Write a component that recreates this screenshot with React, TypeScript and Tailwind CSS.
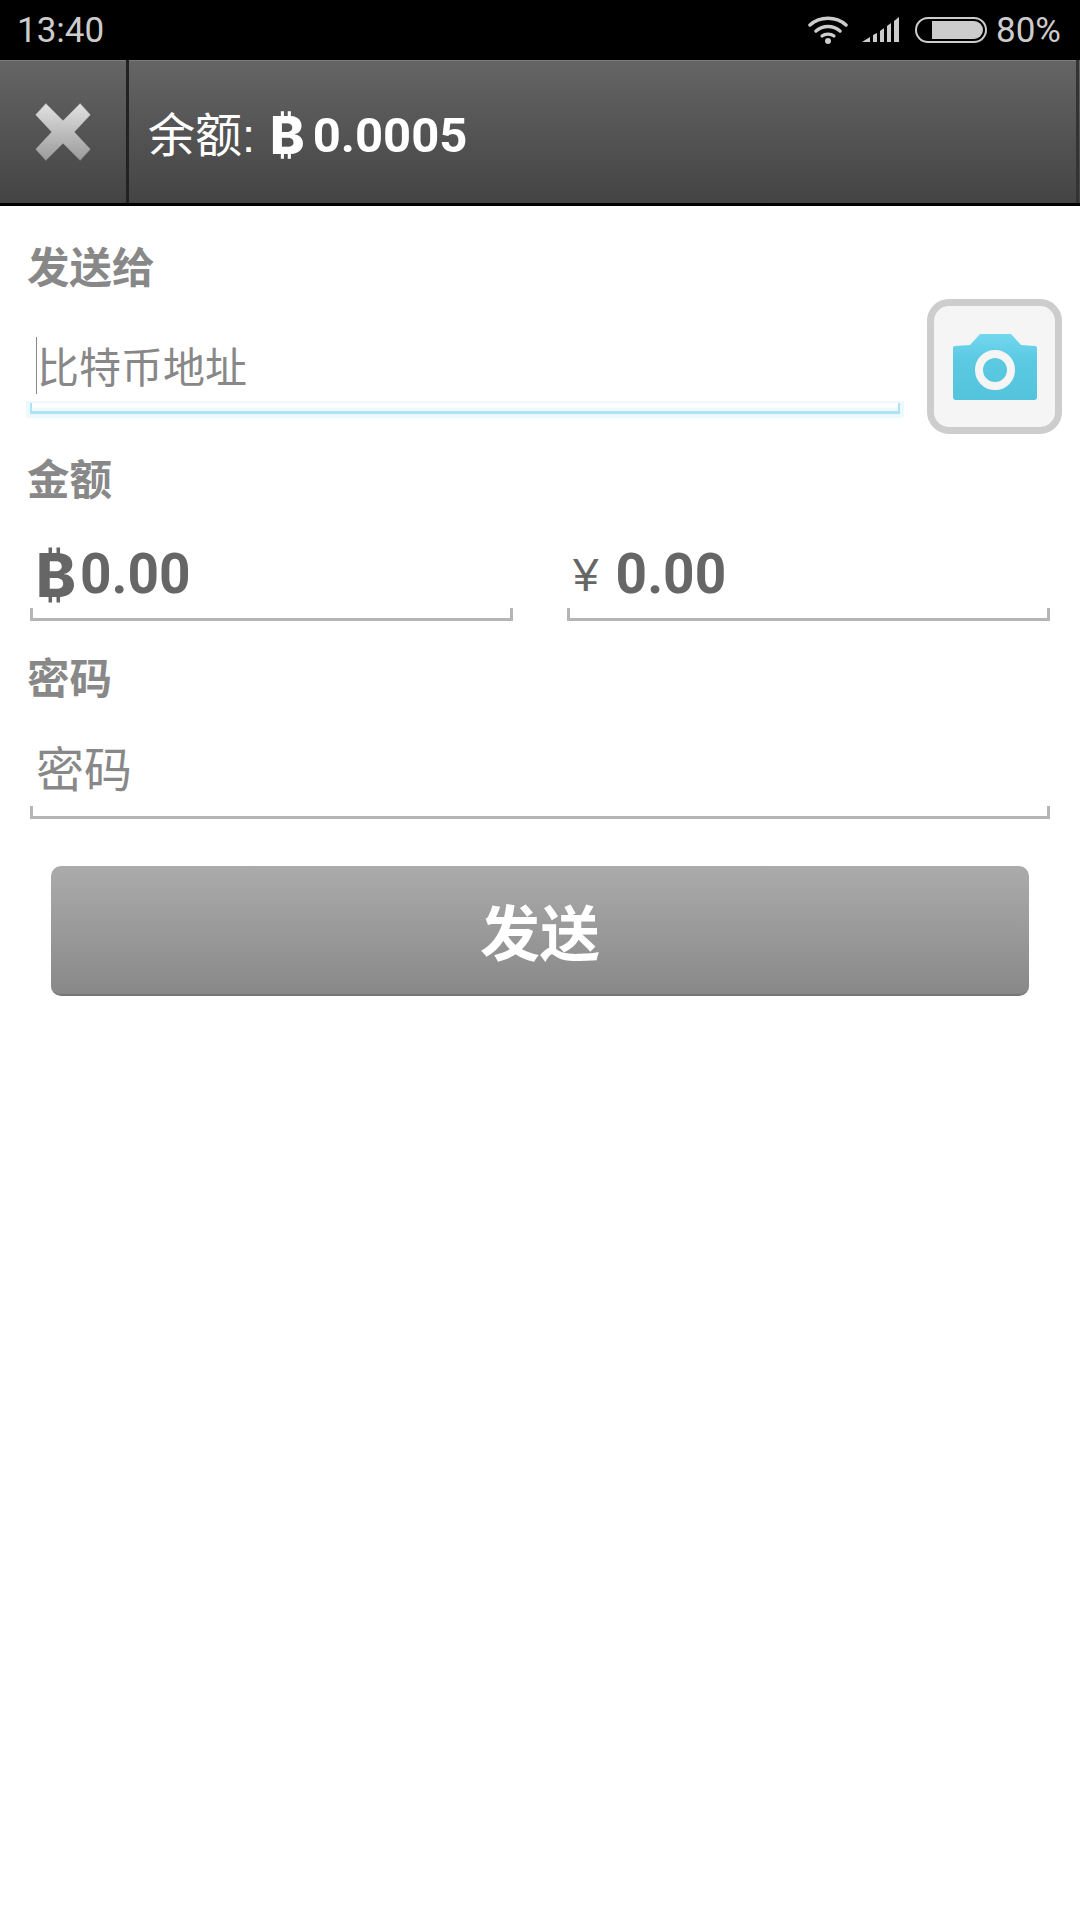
const cjk = "font-['Liberation_Sans','Noto_Sans_CJK_SC',sans-serif]"

const WifiIcon = () => (
    <svg width="40" height="30" viewBox="0 0 40 30" fill="none" stroke="#ccc" strokeLinecap="round">
        <path d="M2 10 C12 1 28 1 38 10" strokeWidth="3.5" />
        <path d="M8 16 C15 10 25 10 32 16" strokeWidth="3.5" />
        <path d="M14 21 C17 18.500 23 18.500 26 21" strokeWidth="3.2" />
        <circle cx="20" cy="26" r="3" fill="#ccc" stroke="none" />
    </svg>
)

const SignalIcon = () => (
    <svg width="38" height="26" viewBox="0 0 38 26" fill="#ccc">
        <path d="M0 25 L8 20 L8 25 Z" />
        <path d="M11 18 L15 16 L15 25 L11 25 Z" />
        <path d="M18 14 L22 11 L22 25 L18 25 Z" />
        <path d="M25 9 L29 6 L29 25 L25 25 Z" />
        <path d="M32 4 L37 0 L37 25 L32 25 Z" />
    </svg>
)

const BatteryIcon = () => (
    <div className="flex h-[26px] w-[72px] items-center justify-end rounded-[13px] border-2 border-[#ccc] pr-[2px]">
        <div className="h-[18px] w-[51px] rounded-r-[9px] bg-[#ccc]" />
    </div>
)

const CloseIcon = () => (
    <svg width="60" height="60" viewBox="0 0 54 56">
        <defs>
            <linearGradient id="closeFill" x1="0" y1="0" x2="0" y2="1">
                <stop offset="0" stopColor="#e2e2e2" />
                <stop offset="1" stopColor="#9a9a9a" />
            </linearGradient>
        </defs>
        <path
            d="M11 1 L27 17 L43 1 L53 12 L38 28 L53 44 L43 55 L27 39 L11 55 L1 44 L16 28 L1 12 Z"
            fill="url(#closeFill)"
            stroke="#444"
            strokeOpacity="0.4"
            strokeWidth="1"
            strokeLinejoin="round"
        />
    </svg>
)

const CameraIcon = () => (
    <svg width="84" height="68" viewBox="0 0 84 68">
        <defs>
            <linearGradient id="cameraFill" x1="0" y1="0" x2="0" y2="1">
                <stop offset="0" stopColor="#72d8ef" />
                <stop offset="0.4" stopColor="#5bc9e2" />
                <stop offset="1" stopColor="#54c3dc" />
            </linearGradient>
        </defs>
        <path
            d="M2 13 L17 12 L27 1 L58 1 L68 12 L82 13 Q84 13 84 15 L84 64 Q84 67 81 67 L3 67 Q0 67 0 64 L0 15 Q0 13 2 13 Z"
            fill="url(#cameraFill)"
        />
        <circle cx="42" cy="37" r="16" fill="none" stroke="#f5f5f5" strokeWidth="8" />
    </svg>
)

const FieldLine = ({ focused }: { focused?: boolean }) => (
    <div
        className={
            focused
                ? "h-[11px] w-full rounded-b-[1px] border-x-[2px] border-b-[3px] border-[#ace3f6] shadow-[0_0_0_4px_#edf9fd,inset_0_-3px_0_#edf9fd] [clip-path:inset(-2px_-6px_-6px_-6px)]"
                : "h-[13px] w-full border-x-[3px] border-b-[3px] border-[#b5b5b5]"
        }
    />
)

export default function App() {
    return (
        <div className={`flex h-[1920px] w-[1080px] flex-col overflow-hidden bg-white ${cjk}`}>
            {/* Status bar */}
            <div className="flex h-[60px] shrink-0 items-center justify-between bg-black pl-[17px] pr-[19px] text-[#ccc]">
                <span className="font-['Roboto',sans-serif] text-[35px] leading-none">13:40</span>
                <div className="flex items-center">
                    <WifiIcon />
                    <div className="ml-[14px]"><SignalIcon /></div>
                    <div className="ml-[15px]"><BatteryIcon /></div>
                    <span className="ml-[9px] font-['Roboto',sans-serif] text-[35px] leading-none">80%</span>
                </div>
            </div>

            {/* Toolbar */}
            <div className="flex h-[146px] shrink-0 border-b-[3px] border-black bg-gradient-to-b from-[#656565] to-[#444]">
                <div className="flex w-[126px] shrink-0 items-center justify-center border-t border-[#7c7c7c]">
                    <CloseIcon />
                </div>
                <div className="w-[3px] shrink-0 bg-[#222]" />
                <div className="flex flex-1 items-center border-t border-[#7c7c7c] pl-[19px] pt-[7px] text-white">
                    <span className="text-[47px] leading-none">余额:</span>
                    <span className="ml-[15px] font-['Inter',sans-serif] text-[52px] font-extrabold leading-none">₿</span>
                    <span className="ml-[8px] font-['Roboto',sans-serif] text-[49px] font-bold leading-none">0.0005</span>
                </div>
                <div className="w-[3px] shrink-0 bg-[#333]" />
                <div className="w-px shrink-0" />
            </div>

            {/* Form */}
            <div className="flex flex-col pl-[27px] pr-[30px] pt-[42px]">
                <span className="text-[42.500px] font-bold leading-[41px] text-[#888]">发送给</span>

                <div className="-mr-[12px] mt-[10px] flex">
                    <div className="ml-[3px] flex w-[870px] shrink-0 flex-col pt-[49px]">
                        <div className="relative flex h-[55px] items-start pl-[7px]">
                            <div className="absolute left-[6px] top-[-11px] h-[57px] w-px bg-[#888]" />
                            <span className="text-[42px] leading-[42px] text-[#888]">比特币地址</span>
                        </div>
                        <FieldLine focused />
                    </div>
                    <div className="ml-[27px] flex h-[135px] w-[135px] shrink-0 items-center justify-center rounded-[22px] border-[7px] border-[#cdcdcd] bg-[#f5f5f5]">
                        <CameraIcon />
                    </div>
                </div>

                <span className="mt-[26px] text-[42.500px] font-bold leading-[41px] text-[#888]">金额</span>

                <div className="mt-[38px] flex justify-between pl-[3px]">
                    <div className="flex w-[483px] flex-col">
                        <div className="flex h-[69px] items-center pl-[6px] pt-[2px] text-[#666]">
                            <span className="font-['Inter',sans-serif] text-[60px] font-extrabold leading-none">₿</span>
                            <span className="ml-[4px] font-['Roboto',sans-serif] text-[55px] font-bold leading-none">0.00</span>
                        </div>
                        <FieldLine />
                    </div>
                    <div className="flex w-[483px] flex-col">
                        <div className="flex h-[69px] items-center pl-[6px] pt-[2px] text-[#666]">
                            <span className="text-[46px] leading-none">¥</span>
                            <span className="ml-[17px] font-['Roboto',sans-serif] text-[55px] font-bold leading-none">0.00</span>
                        </div>
                        <FieldLine />
                    </div>
                </div>

                <span className="mt-[38px] text-[42.500px] font-bold leading-[41px] text-[#888]">密码</span>

                <div className="ml-[3px] mt-[47px] flex flex-col">
                    <span className="h-[59px] pl-[6px] text-[48px] leading-[48px] text-[#888]">密码</span>
                    <FieldLine />
                </div>

                {/* Send */}
                <button className="ml-[24px] mr-[21px] mt-[47px] flex h-[130px] items-center justify-center rounded-[10px] border-b-2 border-[#777] bg-gradient-to-b from-[#ababab] via-[#9a9a9a] to-[#888] pt-[12px] text-[60px] font-bold leading-none text-white">
                    发送
                </button>
            </div>
        </div>
    )
}
